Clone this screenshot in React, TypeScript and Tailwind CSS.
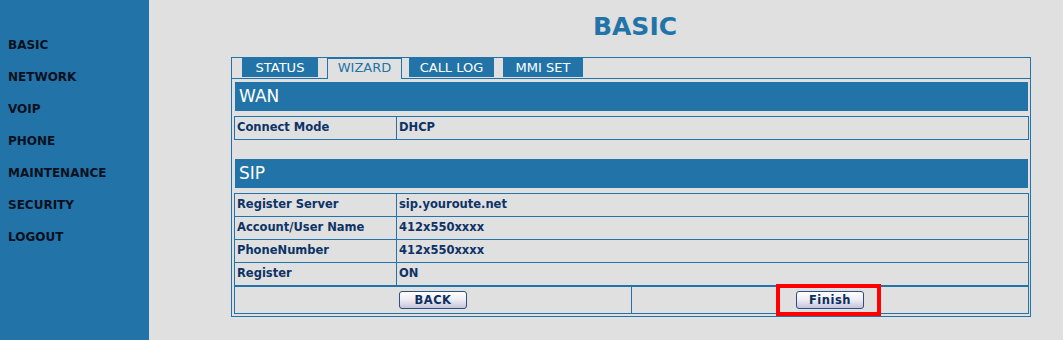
const navItems = ['BASIC', 'NETWORK', 'VOIP', 'PHONE', 'MAINTENANCE', 'SECURITY', 'LOGOUT'];

const tabs = [
  { label: 'STATUS', w: 'w-[76px]', ml: 'ml-[10px]' },
  { label: 'WIZARD', w: 'w-[73px]', ml: 'ml-[9px]', active: true },
  { label: 'CALL LOG', w: 'w-[85px]', ml: 'ml-[7px]' },
  { label: 'MMI SET', w: 'w-[80px]', ml: 'ml-[9px]' },
];

const sipRows = [
  ['Register Server', 'sip.youroute.net'],
  ['Account/User Name', '412x550xxxx'],
  ['PhoneNumber', '412x550xxxx'],
  ['Register', 'ON'],
];

function Row({ label, value, last }: { label: string; value: string; last?: boolean }) {
  return (
    <div className={`flex h-[22px] items-center ${last ? '' : 'border-b border-[#2274a8]'} box-content`}>
      <div className="w-[159px] h-full flex items-center pl-[2px] border-r border-[#2274a8] box-content">{label}</div>
      <div className="flex-1 pl-[2px]">{value}</div>
    </div>
  );
}

function SectionHeader({ title }: { title: string }) {
  return (
    <div className="ml-[3px] mr-[2px] h-[29px] bg-[#2274a8] text-white text-[17px] leading-[29px] pl-[4px]">
      {title}
    </div>
  );
}

function Btn({ label }: { label: string }) {
  return (
    <button className="w-[68px] h-[18px] rounded-[3px] border border-[#2a4f80] bg-gradient-to-b from-white via-[#ececf4] to-[#c4c4dc] text-[11.5px] font-bold text-[#0d2f5e] leading-[16px] tracking-[0.5px]">
      {label}
    </button>
  );
}

export default function App() {
  return (
    <div className="flex min-h-screen w-full bg-[#e0e0e0] font-['DejaVu_Sans',sans-serif]">
      <aside className="w-[149px] shrink-0 bg-[#2274a8] pt-[29px]">
        {navItems.map((item) => (
          <div key={item} className="h-[32px] leading-[32px] pl-[8px] text-[12px] font-bold text-[#0b1020]">
            {item}
          </div>
        ))}
      </aside>

      <main className="flex-1">
        <div className="ml-[82px] w-[800px]">
          <h1 className="pt-[12px] pl-[8px] text-center text-[25px] leading-[30px] font-bold text-[#2274a8]">BASIC</h1>

          <div className="mt-[15px] border border-[#2274a8] pb-[2px]">
            {/* tabs */}
            <div className="flex items-end h-[20px] border-b border-[#2274a8] box-content">
              {tabs.map((t) =>
                t.active ? (
                  <div
                    key={t.label}
                    className={`${t.w} ${t.ml} relative -mb-px h-[20px] bg-[#e0e0e0] border-l border-t border-r border-[#2274a8] text-[#2274a8] text-[13px] leading-[18px] text-center box-content`}
                  >
                    {t.label}
                  </div>
                ) : (
                  <div
                    key={t.label}
                    className={`${t.w} ${t.ml} h-[19px] self-start bg-[#2274a8] text-white text-[13px] leading-[19px] text-center`}
                  >
                    {t.label}
                  </div>
                )
              )}
            </div>

            <div className="mt-[3px]">
              <SectionHeader title="WAN" />
            </div>
            <div className="mt-[5px] ml-[2px] mr-[1px] border border-[#2274a8] text-[11.5px] font-bold text-[#0d3366]">
              <Row label="Connect Mode" value="DHCP" last />
            </div>

            <div className="mt-[19px]">
              <SectionHeader title="SIP" />
            </div>
            <div className="mt-[5px] ml-[2px] mr-[1px] border border-[#2274a8] text-[11.5px] font-bold text-[#0d3366]">
              {sipRows.map(([l, v], i) => (
                <Row key={l} label={l} value={v} last={i === sipRows.length - 1} />
              ))}
              <div className="flex h-[26px] border-t-2 border-[#2274a8] box-content">
                <div className="flex-1 flex items-center justify-center border-r border-[#2274a8]">
                  <Btn label="BACK" />
                </div>
                <div className="flex-1 flex items-center justify-center">
                  <div className="relative">
                    <Btn label="Finish" />
                    <div className="absolute left-[-20px] top-[-7px] w-[105px] h-[32px] border-[4px] border-[#ff0000] pointer-events-none" />
                  </div>
                </div>
              </div>
            </div>
          </div>
        </div>
      </main>
    </div>
  );
}
